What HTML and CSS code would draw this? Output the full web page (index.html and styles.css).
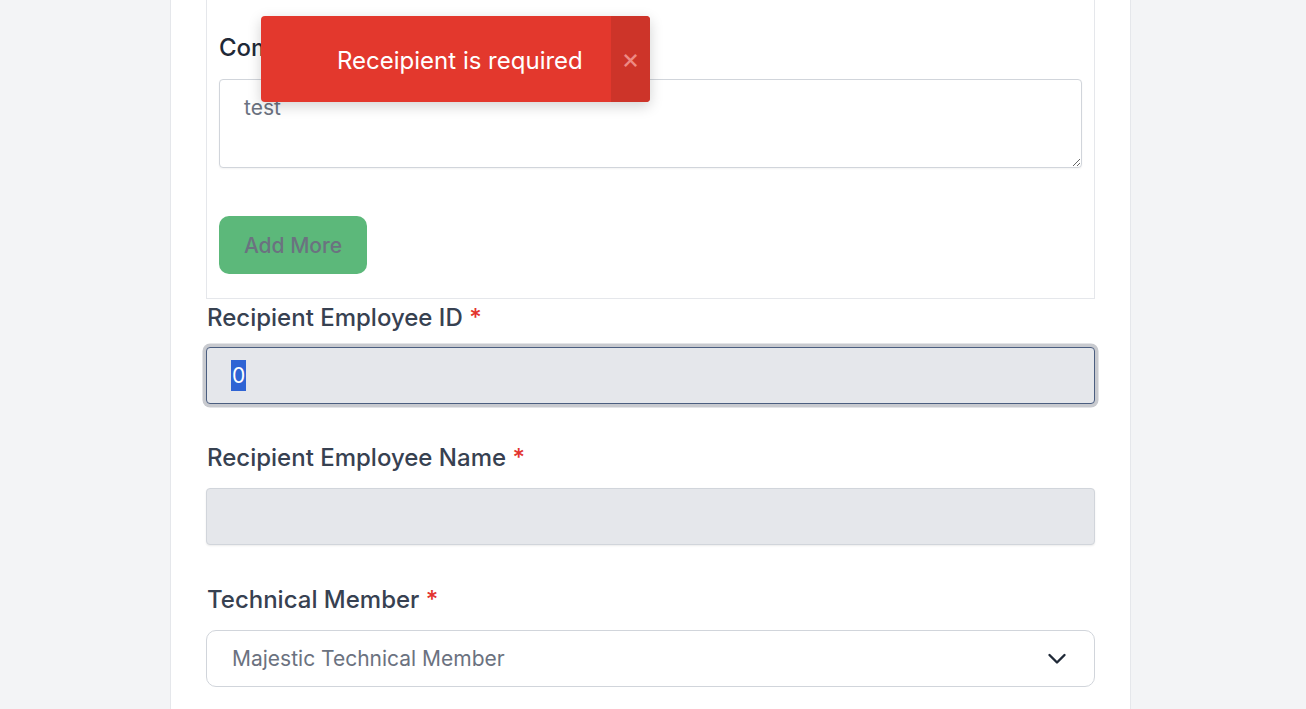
FILE: index.html
```html
<!DOCTYPE html>
<html>
<head>
<meta charset="utf-8">
<link rel="stylesheet" href="styles.css">
</head>
<body>
<div class="page">
  <div class="card">
    <div class="repeater">
      <div class="field-label small">Comment</div>
      <textarea class="textarea">test</textarea>
      <button class="add-btn" type="button">Add More</button>
    </div>

    <div class="field first">
      <div class="label">Recipient Employee ID <span class="req">*</span></div>
      <div class="input focused"><span class="sel">0</span></div>
    </div>

    <div class="field">
      <div class="label">Recipient Employee Name <span class="req">*</span></div>
      <div class="input readonly"></div>
    </div>

    <div class="field last">
      <div class="label">Technical Member <span class="req">*</span></div>
      <div class="select">
        <span class="placeholder">Majestic Technical Member</span>
        <svg class="chev" width="20" height="14" viewBox="0 0 20 14" fill="none"><path d="M2.5 3 L10 10.5 L17.5 3" stroke="#1f2937" stroke-width="2.4" stroke-linecap="round" stroke-linejoin="round"/></svg>
      </div>
    </div>
  </div>

  <div class="toast">
    <div class="toast-msg">Receipient is required</div>
    <div class="toast-close">×</div>
  </div>
</div>
</body>
</html>
```

FILE: styles.css
```css
* { box-sizing: border-box; }
html, body { margin: 0; padding: 0; }
body {
  background: #f3f4f6;
  font-family: Inter, "Noto Sans", "Liberation Sans", sans-serif;
  color: #374151;
  height: 709px;
  overflow: hidden;
}
.page {
  padding-left: 170px;
  position: relative;
}
.card {
  width: 961px;
  background: #ffffff;
  border-left: 1px solid #e5e7eb;
  border-right: 1px solid #e5e7eb;
  padding: 0 35px 40px 35px;
  min-height: 709px;
}
.repeater {
  border: 1px solid #e5e7eb;
  border-top: none;
  padding: 34px 12px 24px 12px;
}
.field-label.small {
  font-size: 24px;
  font-weight: 500;
  line-height: 28px;
  color: #1f2937;
  margin-bottom: 17px;
}
.textarea {
  display: block;
  width: 863px;
  height: 89px;
  border: 1px solid #d1d5db;
  border-radius: 4px;
  padding: 16px 24px 15px 24px;
  font-family: Inter, "Noto Sans", "Liberation Sans", sans-serif;
  font-size: 21px;
  line-height: 24px;
  color: #6b7280;
  resize: vertical;
  outline: none;
  box-shadow: 0 1px 2px rgba(0,0,0,0.05);
}
.add-btn {
  display: block;
  margin-top: 48px;
  width: 148px;
  height: 58px;
  border: none;
  border-radius: 10px;
  background: #5cb87a;
  color: #6b7280;
  font-family: Inter, "Noto Sans", "Liberation Sans", sans-serif;
  font-size: 21px;
  font-weight: 500;
}
.field { margin-top: 40px; }
.field.first { margin-top: 5px; }
.field.last { margin-top: 41px; }
.label {
  font-size: 24px;
  font-weight: 500;
  line-height: 28px;
  color: #374151;
  margin-bottom: 16px;
  padding-left: 1px;
}
.field.first .label { margin-bottom: 15px; }
.req { color: #e3342f; }
.input {
  width: 889px;
  height: 57px;
  border: 1px solid #d1d5db;
  border-radius: 4px;
  background: #e5e7eb;
  box-shadow: 0 1px 2px rgba(0,0,0,0.08);
  padding: 0 24px;
  display: flex;
  align-items: center;
  font-size: 21px;
}
.input.focused {
  border-color: #4b5e80;
  box-shadow: 0 0 0 3.5px #c8cacf;
  padding-left: 24px;
}
.sel {
  background: #2f64d4;
  color: #ffffff;
  line-height: 31px;
  padding: 0 1px;
}
.select {
  width: 889px;
  height: 57px;
  border: 1px solid #d1d5db;
  border-radius: 10px;
  background: #ffffff;
  display: flex;
  align-items: center;
  justify-content: space-between;
  padding: 0 27px 0 25px;
}
.placeholder {
  font-size: 21px;
  color: #6b7280;
}
.toast {
  position: absolute;
  left: 261px;
  top: 16px;
  width: 389px;
  height: 86px;
  background: #e3382d;
  border-radius: 4px;
  box-shadow: 0 4px 14px rgba(0,0,0,0.18);
  display: flex;
  overflow: hidden;
}
.toast-msg {
  flex: 1;
  color: #ffffff;
  font-size: 24px;
  font-weight: 400;
  display: flex;
  align-items: center;
  padding-left: 76px;
  padding-top: 2px;
}
.toast-close {
  width: 39px;
  background: #cd3429;
  color: #ee8a84;
  font-size: 28px;
  display: flex;
  align-items: center;
  justify-content: center;
  padding-bottom: 2px;
}
```
